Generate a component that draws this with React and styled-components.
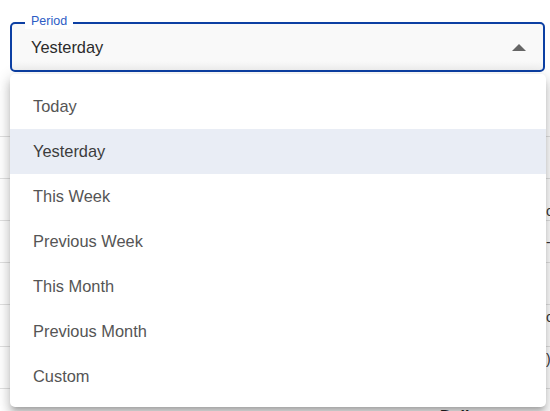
import React, { useState } from 'react';
import styled, { createGlobalStyle } from 'styled-components';

const GlobalStyle = createGlobalStyle`
  body {
    margin: 0;
    background: #fff;
    font-family: "Liberation Sans", Arial, sans-serif;
    overflow: hidden;
  }
`;

const Page = styled.div`
  position: relative;
  width: 550px;
  height: 411px;
  overflow: hidden;
`;

const Header = styled.div`
  padding: 22px 5px 0 10px;
`;

const Field = styled.div`
  position: relative;
  height: 50px;
  box-sizing: border-box;
  border: 2px solid #0c3fa3;
  border-radius: 5px;
  background: linear-gradient(#f9f9f9, #f9f9f9 80%, #f1f1f1);
  display: flex;
  align-items: center;
  justify-content: space-between;
  padding: 0 17px 0 19px;
`;

const Label = styled.span`
  position: absolute;
  top: -11px;
  left: 13px;
  padding: 0 6px;
  background: #fff;
  font-size: 12.5px;
  line-height: 16px;
  color: #2c5cc5;
`;

const Value = styled.span`
  font-size: 16.4px;
  color: #2b2b2b;
  padding-top: 1px;
`;

const Table = styled.div`
  margin-top: 23px;
`;

const Row = styled.div`
  height: 42px;
  border-bottom: 1px solid #e0e0e0;
  display: grid;
  grid-template-columns: 440px 106px max-content;
  align-items: ${p => p.$align || 'center'};
  padding: ${p => p.$pad || '0'};
  box-sizing: border-box;
  font-size: 14px;
  color: #333;
  white-space: nowrap;
`;

const Name = styled.span`
  font-size: 16px;
  font-weight: bold;
  color: #222;
`;

const Menu = styled.ul`
  position: absolute;
  top: 74px;
  left: 10px;
  width: 536px;
  margin: 0;
  padding: 10px 0 8px;
  list-style: none;
  background: #fff;
  border-radius: 5px;
  box-shadow: 0px 5px 5px -3px rgba(0, 0, 0, 0.2),
    0px 8px 10px 1px rgba(0, 0, 0, 0.14),
    0px 3px 14px 2px rgba(0, 0, 0, 0.12);
`;

const Item = styled.li`
  height: 45px;
  display: flex;
  align-items: center;
  padding-left: 23px;
  font-size: 16.4px;
  color: ${p => (p.$selected ? '#3c3c3c' : '#555')};
  background: ${p => (p.$selected ? '#e9edf5' : 'transparent')};
  cursor: pointer;
`;

const options = [
  'Today',
  'Yesterday',
  'This Week',
  'Previous Week',
  'This Month',
  'Previous Month',
  'Custom',
];

function App() {
  const [period, setPeriod] = useState('Yesterday');
  return (
    <Page>
      <GlobalStyle />
      <Header>
        <Field>
          <Label>Period</Label>
          <Value>{period}</Value>
          <svg width="14" height="7" viewBox="0 0 14 7">
            <path d="M0 7 L7 0 L14 7 Z" fill="#666" />
          </svg>
        </Field>
      </Header>
      <Table>
        <Row />
        <Row />
        <Row $align="end" $pad="0 0 1px">
          <span />
          <span />
          <span>c</span>
        </Row>
        <Row>
          <span />
          <span />
          <span>-</span>
        </Row>
        <Row />
        <Row $align="start" $pad="4px 0 0">
          <span />
          <span />
          <span>c</span>
        </Row>
        <Row $align="start" $pad="4px 0 0">
          <span />
          <span />
          <span>)</span>
        </Row>
        <Row $align="start" $pad="19px 0 0">
          <span />
          <Name>Daily</Name>
        </Row>
      </Table>
      <Menu>
        {options.map(o => (
          <Item key={o} $selected={o === period} onClick={() => setPeriod(o)}>
            {o}
          </Item>
        ))}
      </Menu>
    </Page>
  );
}

export default App;
